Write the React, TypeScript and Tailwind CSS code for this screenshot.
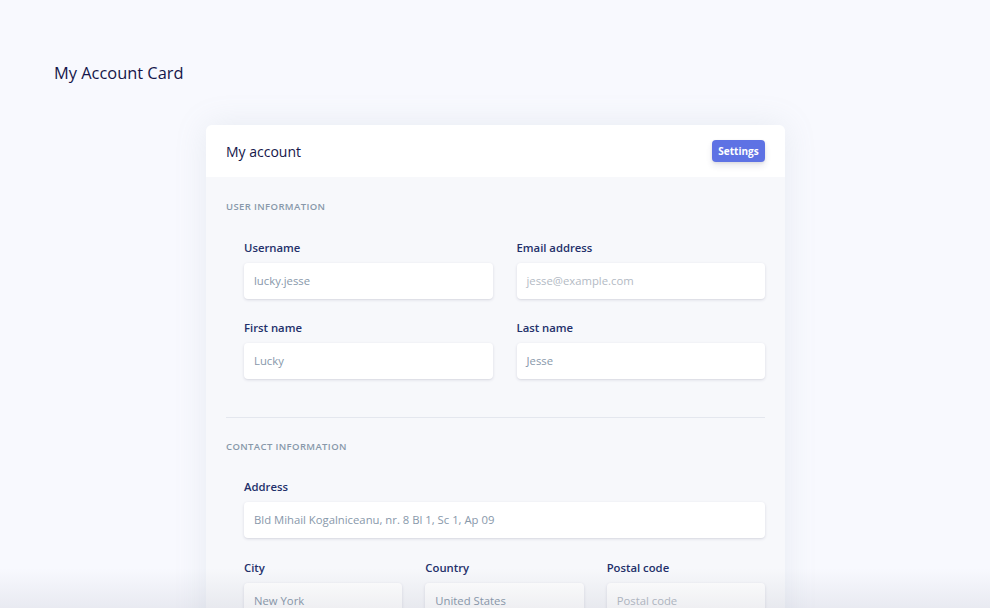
import React from "react";

function Field({ label, value, placeholder }: { label: string; value?: string; placeholder?: string }) {
  return (
    <div className="flex flex-col">
      <label className="text-[11.3px] leading-[18px] font-semibold text-[#23306a] mb-[6px]">{label}</label>
      <div className="h-[36px] bg-white rounded-[4px] shadow-[0_1px_3px_rgba(50,50,93,0.15),0_1px_0_rgba(0,0,0,0.02)] flex items-center px-[10px] pt-[1px] text-[11.3px]">
        {value ? <span className="text-[#8898aa]">{value}</span> : <span className="text-[#b3bac4]">{placeholder}</span>}
      </div>
    </div>
  );
}

export default function App() {
  return (
    <div className="relative h-[608px] overflow-hidden bg-[#f8f9fe]" style={{ fontFamily: '"Open Sans", sans-serif' }}>
      <div className="pt-[61px] pl-[54px] text-[16.4px] leading-[24px] text-[#15164a]">My Account Card</div>
      <div className="mt-[40px] ml-[206px] w-[579px] rounded-[6px] bg-[#f7f8fb] shadow-[0_0_2rem_0_rgba(136,152,170,0.15)] overflow-hidden">
        <div className="h-[52px] bg-white flex items-center justify-between pl-5 pr-[20px]">
          <div className="text-[14px] text-[#15164a] pt-[1px]">My account</div>
          <button className="h-[22px] w-[53px] bg-[#5e72e4] rounded-[4px] text-white text-[10px] font-bold shadow-[0_4px_6px_rgba(50,50,93,0.11),0_1px_3px_rgba(0,0,0,0.08)]">Settings</button>
        </div>
        <div className="px-5 pt-[23px]">
          <div className="text-[9.5px] leading-[14px] font-semibold tracking-[0.04em] uppercase text-[#8898aa]">User information</div>
          <div className="pl-[18px] mt-[25px] grid grid-cols-2 gap-x-[24px] gap-y-[20px]">
            <Field label="Username" value="lucky.jesse" />
            <Field label="Email address" placeholder="jesse@example.com" />
            <Field label="First name" value="Lucky" />
            <Field label="Last name" value="Jesse" />
          </div>
          <div className="mt-[38px] h-px bg-[#e4e7ee]" />
          <div className="mt-[22px] text-[9.5px] leading-[14px] font-semibold tracking-[0.04em] uppercase text-[#8898aa]">Contact information</div>
          <div className="pl-[18px] mt-[24px] flex flex-col gap-[21px]">
            <Field label="Address" value="Bld Mihail Kogalniceanu, nr. 8 Bl 1, Sc 1, Ap 09" />
            <div className="grid grid-cols-3 gap-x-[23px]">
              <Field label="City" value="New York" />
              <Field label="Country" value="United States" />
              <Field label="Postal code" placeholder="Postal code" />
            </div>
          </div>
          <div className="h-[60px]" />
        </div>
      </div>
      <div className="pointer-events-none absolute left-0 right-0 bottom-0 h-[40px] bg-gradient-to-b from-transparent to-[rgba(120,125,150,0.12)]" />
    </div>
  );
}
